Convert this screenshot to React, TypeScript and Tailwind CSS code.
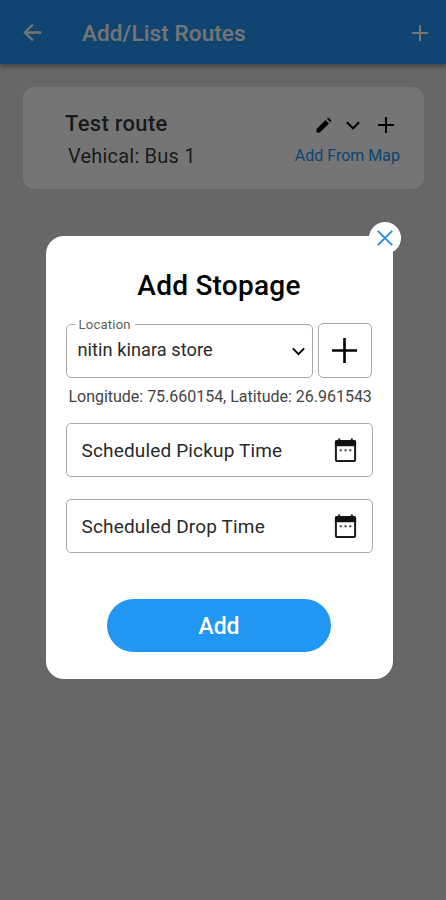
const timeFields = ["Scheduled Pickup Time", "Scheduled Drop Time"];

type IconProps = { className?: string; width?: number };

const BackIcon = ({ className }: IconProps) => (
  <svg className={className} viewBox="0 0 20 20" fill="none" stroke="currentColor" strokeWidth="2.3">
    <path d="M19.2 9.5H3M10.9 1.5l-8 8 8 8" />
  </svg>
);

const PlusIcon = ({ className, width = 2 }: IconProps) => (
  <svg className={className} viewBox="0 0 24 24" fill="none" stroke="currentColor" strokeWidth={width}>
    <path d="M12 0v24M0 12h24" />
  </svg>
);

const ChevronIcon = ({ className }: IconProps) => (
  <svg className={className} viewBox="0 0 14 9" fill="none" stroke="currentColor" strokeWidth="2">
    <path d="M.9 1.2 7 7.3l6.1-6.1" />
  </svg>
);

const CloseIcon = ({ className }: IconProps) => (
  <svg className={className} viewBox="0 0 16 16" fill="none" stroke="currentColor" strokeWidth="1.7">
    <path d="m.8.8 14.4 14.4M15.2.8.8 15.2" />
  </svg>
);

const PencilIcon = ({ className }: IconProps) => (
  <svg className={className} viewBox="0 0 16 16" fill="currentColor">
    <path d="M.5 12 9.6 3l3.4 3.4-9.1 9.1H1.2a.7.7 0 0 1-.7-.7zM10.9 1.8l.9-.9a.8.8 0 0 1 1.1 0l2.3 2.3a.8.8 0 0 1 0 1.1l-.9.9z" />
  </svg>
);

const CalendarIcon = () => (
  <svg className="h-6 w-6 shrink-0" viewBox="0 0 24 24" fill="none">
    <rect x="2.9" y="3" width="19.2" height="20" rx="1.6" stroke="#1c1c1c" strokeWidth="2" />
    <path d="M1.9 3.6q0-1.4 1.4-1.4h18.4q1.4 0 1.4 1.4v4.6H1.9zM5.2.6h2v3h-2zM17.8.6h2v3h-2z" fill="#111" />
    <path d="M6.7 11.2h2v2h-2zM11.5 11.2h2v2h-2zM16.3 11.2h2v2h-2z" fill="#444" />
  </svg>
);

const Header = () => (
  <header className="flex h-16 items-center bg-[#2196f3] pt-px text-white shadow-[0_2px_5px_rgba(0,0,0,0.45)]">
    <BackIcon className="ml-[22px] h-5 w-5" />
    <h1 className="ml-10 flex-1 pt-px text-[22.5px] font-medium leading-none tracking-[0.1px]">
      Add/List Routes
    </h1>
    <PlusIcon className="mr-[18px] h-4 w-4" width={3} />
  </header>
);

const RouteCard = () => (
  <section className="mt-[23px] mr-[22px] ml-[23px] h-[102px] rounded-xl bg-white pr-6 pl-[42px]">
    <div className="flex items-center justify-between pt-[22px]">
      <h2 className="text-[22px] font-medium leading-[30px] tracking-[0.3px] text-black/80">
        Test route
      </h2>
      <div className="flex items-center pt-[2px] pr-[6px] text-black">
        <PencilIcon className="h-4 w-4" />
        <ChevronIcon className="ml-[14px] h-[9px] w-[14px]" />
        <PlusIcon className="ml-[18px] h-4 w-4" width={2.8} />
      </div>
    </div>
    <div className="flex items-center justify-between pt-[3px] pl-[3px]">
      <p className="text-[20px] leading-[26px] tracking-[0.2px] text-black/80">Vehical: Bus 1</p>
      <button className="pt-px text-[16px] leading-[26px] text-[#2196f3]">Add From Map</button>
    </div>
  </section>
);

const StopageDialog = () => (
  <div className="relative h-[443px] w-[347px] rounded-[18px] bg-white px-5 text-[#2a2a2a]">
    <button className="absolute -top-[14.5px] -right-[8.5px] flex h-8 w-8 items-center justify-center rounded-full bg-white">
      <CloseIcon className="h-4 w-4 text-[#1e88d8]" />
    </button>
    <h2 className="pt-[31px] text-center text-[28px] font-medium leading-[38px] tracking-[0.25px] text-black">
      Add Stopage
    </h2>

    <div className="mt-[11px] flex items-end justify-between">
      <fieldset className="h-[62px] w-[247px] rounded-[5px] border border-[#aaa] pr-[7px] pl-[11px]">
        <legend className="-ml-[3px] px-1 text-[13px] leading-4 tracking-[0.25px] text-[#606060]">
          <span className="relative top-px">Location</span>
        </legend>
        <div className="flex items-center justify-between pt-[7px]">
          <span className="text-[18.2px] leading-[22px] tracking-[0.05px]">nitin kinara store</span>
          <ChevronIcon className="mt-[2px] h-[9px] w-[13px] text-black" />
        </div>
      </fieldset>
      <button className="mr-px flex h-[55px] w-[54px] items-center justify-center rounded-[5px] border border-[#aaa]">
        <PlusIcon className="h-[25px] w-[25px] text-black" width={2.5} />
      </button>
    </div>
    <p className="mt-[9px] pl-[3px] text-[16px] leading-5 tracking-[-0.02px] whitespace-nowrap text-[#444]">
      Longitude: 75.660154, Latitude: 26.961543
    </p>

    <div className="mt-[16px] flex flex-col gap-[22px]">
      {timeFields.map((label) => (
        <div
          key={label}
          className="flex h-[54px] items-center justify-between rounded-[5px] border border-[#aaa] pr-[15px] pl-[15px]"
        >
          <span className="pt-[2px] text-[19px] tracking-[0.16px]">{label}</span>
          <CalendarIcon />
        </div>
      ))}
    </div>

    <button className="mx-auto mt-[46px] flex h-[53px] w-[224px] items-center justify-center rounded-full bg-[#2196f3] pt-[3px] text-[23px] font-medium text-white">
      Add
    </button>
  </div>
);

export default function App() {
  return (
    <div className="relative h-[900px] w-full overflow-hidden bg-[#e0e0e0] font-['Roboto','Liberation_Sans',sans-serif]">
      <Header />
      <RouteCard />
      {/* Dimmed backdrop behind the dialog */}
      <div className="absolute inset-0 flex items-start justify-center bg-black/54 pt-[236px] pr-[8px]">
        <StopageDialog />
      </div>
    </div>
  );
}
